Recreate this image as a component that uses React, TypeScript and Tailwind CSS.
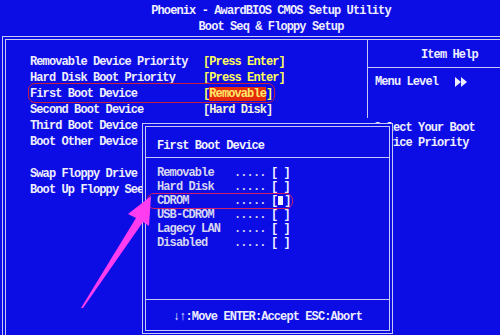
import React from 'react';

const mainRows: { label: string; value?: string; kind?: 'yellow' | 'pale' | 'selected' }[] = [
  { label: 'Removable Device Priority', value: '[Press Enter]', kind: 'yellow' },
  { label: 'Hard Disk Boot Priority', value: '[Press Enter]', kind: 'yellow' },
  { label: 'First Boot Device', value: 'Removable', kind: 'selected' },
  { label: 'Second Boot Device', value: '[Hard Disk]', kind: 'pale' },
  { label: 'Third Boot Device' },
  { label: 'Boot Other Device' },
  { label: '' },
  { label: 'Swap Floppy Drive' },
  { label: 'Boot Up Floppy Seek' },
];

const choices = ['Removable', 'Hard Disk', 'CDROM', 'USB-CDROM', 'Lagecy LAN', 'Disabled'];

const PopupBox: React.FC = () => (
  <div className="absolute left-[142px] top-[123px] w-[251px] h-[211px] bg-[#0c0ce4] border border-[#c8c8f4] p-[2px]">
    <div className="h-full border border-[#c8c8f4] flex flex-col">
      <div className="h-[30px] flex items-center pt-[7px] pl-[11px] text-[#f2f2ff]">First Boot Device</div>
      <div className="border-t border-[#c8c8f4] flex-1 pt-[8px] pl-[11px]">
        {choices.map((c) => (
          <div key={c} className="h-[14px] leading-[14px] flex text-[#d6d6f2]">
            <span className="w-[77px] whitespace-nowrap">{c}</span>
            <span className="w-[37px]">.....</span>
            <span className="text-[#f0f0ff]">
              {c === 'CDROM' ? (
                <>
                  [<span className="inline-block w-[5px] h-[9px] bg-[#f4f4ff] align-[-1px] mx-[1px]"></span>]
                </>
              ) : (
                '[ ]'
              )}
            </span>
          </div>
        ))}
      </div>
      <div className="h-[31px] border-t border-[#c8c8f4] flex items-center justify-center pt-[3px] text-[#ececff]">
        <span>↓↑:Move ENTER:Accept ESC:Abort</span>
      </div>
    </div>
  </div>
);

export default function App() {
  return (
    <div
      className="relative w-[500px] h-[335px] overflow-hidden bg-[#0c0ce4] text-[12px] tracking-[-0.9px] font-bold text-[#eeeeff]"
      style={{ fontFamily: '"Liberation Mono", "DejaVu Sans Mono", monospace' }}
    >
      {/* title */}
      <div className="h-[36px] pt-[3px] flex flex-col items-center leading-[16px] pl-[42px]">
        <div>Phoenix - AwardBIOS CMOS Setup Utility</div>
        <div>Boot Seq &amp; Floppy Setup</div>
      </div>

      {/* main frame */}
      <div className="ml-[2px] border-t border-l border-[#c8c8f4] pt-[2px] pl-[2px] h-[299px]">
        <div className="h-full border-t border-l border-[#c8c8f4] flex">
          <div className="w-[361px] pt-[14px] pl-[24px] leading-[16px]">
            {mainRows.map((r, i) => (
              <div key={i} className="h-[16px] flex">
                <span className="w-[173px] whitespace-nowrap overflow-hidden">{r.label}</span>
                {r.kind === 'yellow' && <span className="text-[#ffff5a]">{r.value}</span>}
                {r.kind === 'pale' && <span className="text-[#f2f2dc]">{r.value}</span>}
                {r.kind === 'selected' && (
                  <span className="text-[#ffff5a]">
                    [<span className="bg-[#e42a0c] text-[#ffe86a]">{r.value}</span>]
                  </span>
                )}
              </div>
            ))}
          </div>

          <div className="flex-1">
            <div className="h-[78px] border-l border-[#c8c8f4]">
              <div className="h-[28px] border-b border-[#c8c8f4] flex items-center pl-[53px] pt-[2px]">Item Help</div>
              <div className="pl-[7px] pt-[6px] leading-[16px] flex items-center">
                <span>Menu Level</span>
                <svg className="ml-[17px]" width="13" height="10" viewBox="0 0 13 10">
                  <polygon points="0,0 6,5 0,10" fill="#eeeeff" />
                  <polygon points="6,0 12,5 6,10" fill="#eeeeff" />
                </svg>
              </div>
            </div>
            <div className="pl-[7px] pt-[3px] leading-[15px]">
              <div>Select Your Boot</div>
              <div>Device Priority</div>
            </div>
          </div>
        </div>
      </div>

      <PopupBox />

      {/* highlight outlines */}
      <div className="absolute left-[28px] top-[83px] w-[247px] h-[20px] rounded-[7px] border-[1.5px] border-[#c8203c]"></div>
      <div className="absolute left-[147px] top-[193px] w-[146px] h-[16px] rounded-[7px] border-[1.5px] border-[#d0206a]"></div>

      {/* pointer arrow */}
      <svg className="absolute left-0 top-0" width="500" height="335" viewBox="0 0 500 335">
        <polygon
          points="81,308 136,218 128,214 151,196 149,226 143,222 83,308"
          fill="#ff3cf0"
        />
      </svg>
    </div>
  );
}
